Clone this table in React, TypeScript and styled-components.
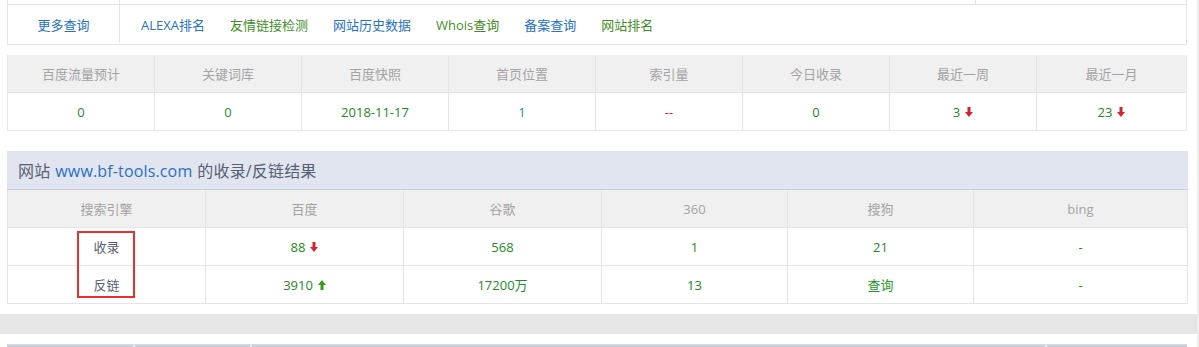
import React from "react";
import styled, { createGlobalStyle } from "styled-components";

const GlobalStyle = createGlobalStyle`
  html, body {
    margin: 0;
    padding: 0;
    background: #fff;
    overflow: hidden;
    font-family: "Open Sans", "Noto Sans CJK SC", sans-serif;
    font-size: 13px;
  }
  * { box-sizing: border-box; }
`;

const Page = styled.div`
  width: 1199px;
  height: 347px;
  overflow: hidden;
  border-right: 2px solid #efefef;
`;

const Inner = styled.div`
  width: 1197px;
  display: flex;
  flex-direction: column;
`;

const Padded = styled.div`
  padding: 0 10px 0 7px;
  display: flex;
  flex-direction: column;
`;

const PrevStrip = styled.div`
  height: 4px;
  display: grid;
  grid-template-columns: 112px 856px 1fr;
  border-left: 1px solid #e5e5e5;
  border-right: 1px solid #e5e5e5;
`;

const PrevCell = styled.div<{ $divider?: boolean }>`
  border-right: ${(p) => (p.$divider ? "1px solid #e5e5e5" : "none")};
`;

const NavBox = styled.div`
  height: 41px;
  border: 1px solid #e5e5e5;
  display: flex;
  align-items: stretch;
`;

const MoreCell = styled.div`
  width: 112px;
  border-right: 1px solid #e5e5e5;
  margin-bottom: 1px;
  display: flex;
  align-items: center;
  justify-content: center;
  color: #2672c8;
  line-height: 16px;
  padding-top: 1px;
`;

const NavLinks = styled.div`
  display: flex;
  align-items: center;
  gap: 25px;
  padding-left: 21px;
`;

const NavLink = styled.a<{ $green?: boolean }>`
  color: ${(p) => (p.$green ? "#3f8f1f" : "#2672c8")};
  text-decoration: none;
  line-height: 16px;
`;

const StatsTable = styled.div`
  margin-top: 10px;
  border: 1px solid #e8e8e8;
  border-top: none;
  display: flex;
  flex-direction: column;
`;

const Row = styled.div<{ $cols: string; $head?: boolean; $last?: boolean }>`
  display: grid;
  grid-template-columns: ${(p) => p.$cols};
  height: ${(p) => (p.$last ? "37px" : "38px")};
  background: ${(p) => (p.$head ? "#f0f0f0" : "#fff")};
  border-bottom: ${(p) => (p.$last ? "none" : "1px solid #e5e5e5")};
`;

const Cell = styled.div<{ $head?: boolean; $color?: string }>`
  display: flex;
  align-items: center;
  justify-content: center;
  gap: 5px;
  color: ${(p) => (p.$head ? "#a3a3a3" : p.$color || "#238a24")};
  line-height: 16px;
  & + & {
    border-left: 1px solid #e5e5e5;
  }
`;

const Section = styled.div`
  position: relative;
  margin-top: 20px;
  width: 1181px;
  border: 1px solid #e5e5e5;
  border-top: none;
  display: flex;
  flex-direction: column;
`;

const TitleBar = styled.div`
  height: 39px;
  background: #e1e5ef;
  border-bottom: 1px solid #c9cfdc;
  margin: 0 -1px;
  padding: 1px 11px 0;
  display: flex;
  align-items: center;
  font-size: 16px;
  color: #566074;
  line-height: 20px;
  letter-spacing: 0.15px;
`;

const Domain = styled.span`
  color: #2a6fc4;
  margin: 0 5px;
`;

const Mark = styled.div`
  position: absolute;
  left: 69px;
  top: 80px;
  width: 58px;
  height: 67px;
  border: 2px solid #e8302f;
  pointer-events: none;
`;

const GrayBand = styled.div`
  margin-top: 10px;
  height: 20px;
  background: #e6e6e6;
`;

const BottomTable = styled.div`
  margin: 10px 10px 0 7px;
  border-top: 1px solid #dcdcdc;
  display: grid;
  grid-template-columns: 126px 117px 795px 1fr;
  height: 38px;
`;

const BottomHead = styled.div`
  background: #c6cee0;
  & + & {
    border-left: 2px solid #eef0f5;
  }
`;

const Arrow = ({ up }: { up?: boolean }) => (
  <svg width="8" height="10" viewBox="0 0 8 10" style={{ display: "block", marginTop: 1 }}>
    {up ? (
      <path d="M4 0 L8 5 L5.5 5 L5.5 10 L2.5 10 L2.5 5 L0 5 Z" fill="#3a9a1e" />
    ) : (
      <path d="M2.5 0 L5.5 0 L5.5 5 L8 5 L4 10 L0 5 L2.5 5 Z" fill="#d1262c" />
    )}
  </svg>
);

const statsCols = "146px repeat(6, 147px) 1fr";
const engineCols = "197px 198px 198px 186px 186px 1fr";

export default function App() {
  const statsHead = ["百度流量预计", "关键词库", "百度快照", "首页位置", "索引量", "今日收录", "最近一周", "最近一月"];
  return (
    <Page>
      <GlobalStyle />
      <Inner>
        <Padded>
          <PrevStrip>
            <PrevCell $divider />
            <PrevCell $divider />
            <PrevCell />
          </PrevStrip>
          <NavBox>
            <MoreCell>更多查询</MoreCell>
            <NavLinks>
              <NavLink href="#">ALEXA排名</NavLink>
              <NavLink href="#" $green>友情链接检测</NavLink>
              <NavLink href="#">网站历史数据</NavLink>
              <NavLink href="#" $green>Whois查询</NavLink>
              <NavLink href="#">备案查询</NavLink>
              <NavLink href="#" $green>网站排名</NavLink>
            </NavLinks>
          </NavBox>

          <StatsTable>
            <Row $cols={statsCols} $head>
              {statsHead.map((h) => (
                <Cell key={h} $head>{h}</Cell>
              ))}
            </Row>
            <Row $cols={statsCols} $last>
              <Cell>0</Cell>
              <Cell>0</Cell>
              <Cell>2018-11-17</Cell>
              <Cell $color="#16929c">1</Cell>
              <Cell $color="#e02020">--</Cell>
              <Cell>0</Cell>
              <Cell>3 <Arrow /></Cell>
              <Cell>23 <Arrow /></Cell>
            </Row>
          </StatsTable>

          <Section>
            <TitleBar>
              网站<Domain>www.bf-tools.com</Domain>的收录/反链结果
            </TitleBar>
            <Row $cols={engineCols} $head>
              <Cell $head>搜索引擎</Cell>
              <Cell $head>百度</Cell>
              <Cell $head>谷歌</Cell>
              <Cell $head>360</Cell>
              <Cell $head>搜狗</Cell>
              <Cell $head>bing</Cell>
            </Row>
            <Row $cols={engineCols}>
              <Cell $color="#585f6e">收录</Cell>
              <Cell>88<Arrow /></Cell>
              <Cell>568</Cell>
              <Cell>1</Cell>
              <Cell>21</Cell>
              <Cell>-</Cell>
            </Row>
            <Row $cols={engineCols} $last>
              <Cell $color="#585f6e">反链</Cell>
              <Cell>3910<Arrow up /></Cell>
              <Cell>17200万</Cell>
              <Cell>13</Cell>
              <Cell $color="#1f9a2a">查询</Cell>
              <Cell>-</Cell>
            </Row>
            <Mark />
          </Section>
        </Padded>
        <GrayBand />
        <BottomTable>
          <BottomHead />
          <BottomHead />
          <BottomHead />
          <BottomHead />
        </BottomTable>
      </Inner>
    </Page>
  );
}
